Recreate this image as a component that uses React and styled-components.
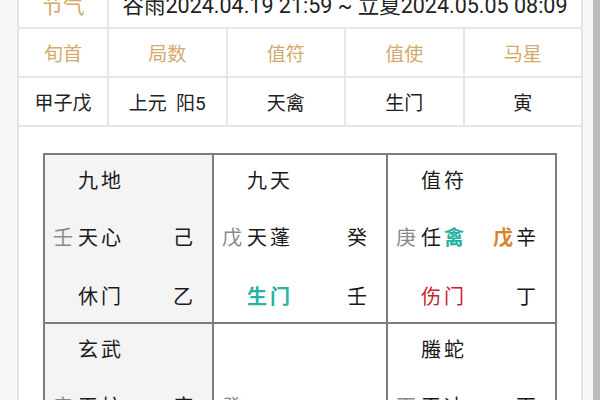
import React from 'react';
import styled, { createGlobalStyle } from 'styled-components';

const Global = createGlobalStyle`
  html, body { margin: 0; padding: 0; height: 100%; overflow: hidden; background: #f7f7f7; }
  body { font-family: Roboto, "Noto Sans CJK SC", sans-serif; color: #222; }
`;

const Page = styled.div`
  display: flex;
  width: 600px;
  height: 400px;
  overflow: hidden;
`;

const Main = styled.div`
  flex: 1;
  padding: 0 10px 0 17px;
`;

const ScrollBar = styled.div`
  width: 7px;
  flex-shrink: 0;
  background: #bdbdbd;
`;

const Card = styled.div`
  margin-top: -20px;
  background: #fff;
  border-left: 2px solid #e4e4e4;
  border-right: 2px solid #e4e4e4;
  padding-bottom: 40px;
`;

const InfoTable = styled.div`
  display: grid;
  grid-template-columns: 88px repeat(4, 1fr);
  grid-auto-rows: 47px;
  gap: 2px;
  padding-bottom: 2px;
  background: #e6e6e6;
`;

const InfoCell = styled.div`
  display: flex;
  align-items: center;
  justify-content: center;
  background: #fff;
  font-size: ${p => (p.$big ? '21.5px' : '19px')};
  color: ${p => (p.$head ? '#d3a96c' : '#222')};
  grid-column: ${p => (p.$span ? `span ${p.$span}` : 'auto')};
  white-space: pre;
`;

const Board = styled.div`
  margin: 26px 24px 0 24px;
  display: grid;
  grid-template-columns: 167px 172px 167px;
  grid-auto-rows: 167px;
  gap: 2px;
  padding: 2px;
  background: #7c7c7c;
`;

const Palace = styled.div`
  display: grid;
  grid-template-rows: 48px 66px 53px;
  background: ${p => (p.$shade ? '#f4f4f4' : '#fff')};
`;

const Line = styled.div`
  display: flex;
  align-items: center;
  padding: 0 16px 0 8px;
  font-family: "Noto Sans CJK SC", sans-serif;
  font-size: 20px;
  letter-spacing: 3px;
  white-space: nowrap;
  color: #1a1a1a;
`;

const Hidden = styled.span`
  width: 25px;
  flex-shrink: 0;
  color: #8a8a8a;
`;

const Name = styled.span`
  flex: 1;
  color: ${p => p.$color || '#1a1a1a'};
  font-weight: ${p => (p.$bold ? 600 : 400)};
`;

const Mark = styled.span`
  color: ${p => p.$color || '#1a1a1a'};
  font-weight: ${p => (p.$bold ? 600 : 400)};
`;

const Stem = styled.span`
  color: #1a1a1a;
`;

const TEAL = '#26b3a3';
const RED = '#c8232c';
const ORANGE = '#d8842c';

const palaces = [
  {
    shade: true,
    god: '九地',
    hidden: '壬',
    star: [{ t: '天心' }],
    heaven: [{ t: '己' }],
    gate: { t: '休门' },
    earth: '乙',
  },
  {
    god: '九天',
    hidden: '戊',
    star: [{ t: '天蓬' }],
    heaven: [{ t: '癸' }],
    gate: { t: '生门', c: TEAL, b: true },
    earth: '壬',
  },
  {
    god: '值符',
    hidden: '庚',
    star: [{ t: '任' }, { t: '禽', c: TEAL, b: true }],
    heaven: [{ t: '戊', c: ORANGE, b: true }, { t: '辛' }],
    gate: { t: '伤门', c: RED },
    earth: '丁',
  },
  {
    shade: true,
    god: '玄武',
    hidden: '辛',
    star: [{ t: '天柱' }],
    heaven: [{ t: '庚' }],
    gate: { t: '开门' },
    earth: '丙',
  },
  {
    god: '',
    hidden: '癸',
    star: [{ t: '' }],
    heaven: [{ t: '' }],
    gate: { t: '' },
    earth: '戊',
  },
  {
    god: '螣蛇',
    hidden: '丙',
    star: [{ t: '天冲' }],
    heaven: [{ t: '丙' }],
    gate: { t: '杜门' },
    earth: '庚',
  },
  {
    shade: true,
    god: '白虎',
    hidden: '乙',
    star: [{ t: '天芮' }],
    heaven: [{ t: '丁' }],
    gate: { t: '惊门' },
    earth: '辛',
  },
  {
    god: '六合',
    hidden: '丁',
    star: [{ t: '天英' }],
    heaven: [{ t: '壬' }],
    gate: { t: '死门' },
    earth: '癸',
  },
  {
    god: '太阴',
    hidden: '己',
    star: [{ t: '天辅' }],
    heaven: [{ t: '乙' }],
    gate: { t: '景门' },
    earth: '己',
  },
];

const heads = ['旬首', '局数', '值符', '值使', '马星'];
const values = ['甲子戊', '上元  阳5', '天禽', '生门', '寅'];

export default function App() {
  return (
    <>
      <Global />
      <Page>
        <Main>
          <Card>
            <InfoTable>
              <InfoCell $head $big>节气</InfoCell>
              <InfoCell $span={4} $big>谷雨2024.04.19 21:59 ~ 立夏2024.05.05 08:09</InfoCell>
              {heads.map(h => (
                <InfoCell key={h} $head>{h}</InfoCell>
              ))}
              {values.map(v => (
                <InfoCell key={v}>{v}</InfoCell>
              ))}
            </InfoTable>
            <Board>
              {palaces.map((p, i) => (
                <Palace key={i} $shade={p.shade}>
                  <Line>
                    <Hidden />
                    <Name>{p.god}</Name>
                  </Line>
                  <Line>
                    <Hidden>{p.hidden}</Hidden>
                    <Name>
                      {p.star.map((s, j) => (
                        <Mark key={j} $color={s.c} $bold={s.b}>{s.t}</Mark>
                      ))}
                    </Name>
                    {p.heaven.map((s, j) => (
                      <Mark key={j} $color={s.c} $bold={s.b}>{s.t}</Mark>
                    ))}
                  </Line>
                  <Line>
                    <Hidden />
                    <Name $color={p.gate.c} $bold={p.gate.b}>{p.gate.t}</Name>
                    <Stem>{p.earth}</Stem>
                  </Line>
                </Palace>
              ))}
            </Board>
          </Card>
        </Main>
        <ScrollBar />
      </Page>
    </>
  );
}
